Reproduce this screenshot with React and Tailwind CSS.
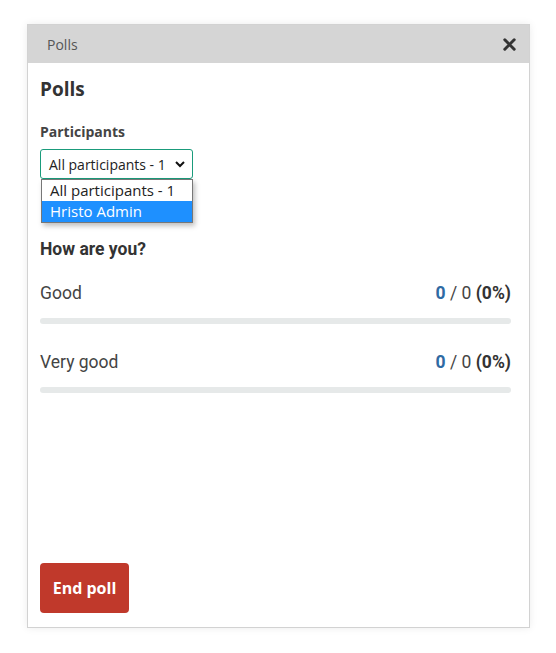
import React from 'react';

const options = [
  { id: 1, label: 'All participants - 1', active: false },
  { id: 2, label: 'Hristo Admin', active: true },
];

const answers = [
  { id: 1, text: 'Good', votes: 0, total: 0 },
  { id: 2, text: 'Very good', votes: 0, total: 0 },
];

const App = () => {
  return (
    <div className="min-h-screen bg-white pt-[24px] pl-[27px] font-['Open_Sans',sans-serif]">
      {/* Poll panel */}
      <div className="w-[503px] h-[604px] border border-[#d2d2d2] bg-white shadow-[0_0_8px_rgba(0,0,0,0.08)] flex flex-col">
        {/* Header bar */}
        <div className="h-[38px] bg-[#d5d5d5] flex items-center justify-between pl-[19px] pr-[12px]">
          <span className="text-[14px] text-[#555]">Polls</span>
          <svg width="15" height="15" viewBox="0 0 16 16" className="text-[#333]">
            <path d="M3 3 L13 13 M13 3 L3 13" stroke="currentColor" strokeWidth="3.2" strokeLinecap="round" />
          </svg>
        </div>

        {/* Body */}
        <div className="flex-1 flex flex-col px-[12px] pt-[14px] pb-[14px]">
          <h2 className="text-[19px] font-bold text-[#333] leading-[24px]">Polls</h2>

          <div className="mt-[22px] text-[14px] font-bold text-[#444] leading-[18px]">Participants</div>

          {/* Select with open list */}
          <div className="relative mt-[8px] w-[153px]">
            <div className="h-[30px] border border-[#1a9b7b] rounded-[3px] flex items-center justify-between pl-[8px] pr-[6px] text-[14px] text-[#222]">
              <span>All participants - 1</span>
              <svg width="12" height="12" viewBox="0 0 12 12">
                <path d="M2 4 L6 8 L10 4" fill="none" stroke="#111" strokeWidth="2" />
              </svg>
            </div>
            <div className="absolute left-[1px] top-[30px] w-[152px] bg-white border border-[#777] shadow-[2px_3px_5px_rgba(0,0,0,0.25)] text-[15px] leading-[21px]">
              {options.map((o) => (
                <div
                  key={o.id}
                  className={o.active ? 'px-[8px] bg-[#1e90ff] text-white' : 'px-[8px] text-[#222]'}
                >
                  {o.label}
                </div>
              ))}
            </div>
          </div>

          {/* Question */}
          <div className="mt-[59px] font-['Roboto',sans-serif]">
            <div className="text-[17.5px] font-bold text-[#333] leading-[22px]">How are you?</div>
            {answers.map((a, i) => (
              <div key={a.id} className={i === 0 ? 'mt-[22px]' : 'mt-[27px]'}>
                <div className="flex items-center justify-between pr-[6px] text-[17.5px] text-[#444] leading-[22px]">
                  <span>{a.text}</span>
                  <span>
                    <span className="font-bold text-[#2f6aa3]">{a.votes}</span> / {a.total} <span className="font-bold text-[#333]">(0%)</span>
                  </span>
                </div>
                <div className="mt-[14px] mr-[6px] h-[6px] rounded-full bg-[#e6e9e9]" />
              </div>
            ))}
          </div>

          <button className="mt-auto w-[89px] h-[50px] rounded-[4px] bg-[#c0392b] text-white text-[16px] font-bold">
            End poll
          </button>
        </div>
      </div>
    </div>
  );
};

export default App;
